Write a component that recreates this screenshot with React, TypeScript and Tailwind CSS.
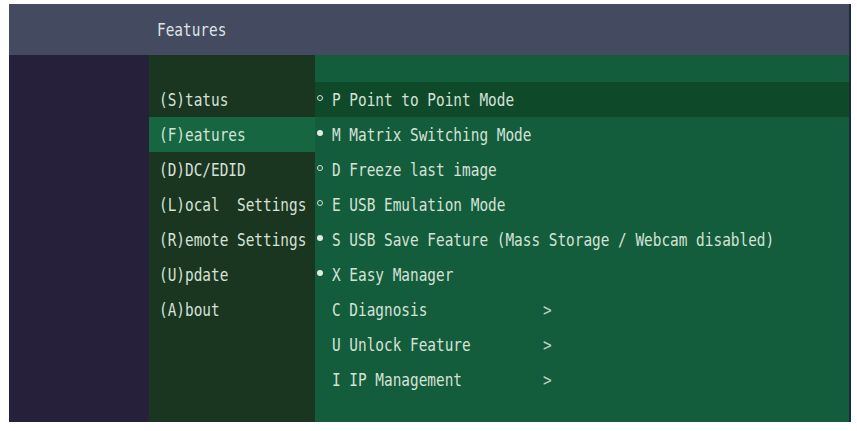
import React from "react";

const menu = [
  "(S)tatus",
  "(F)eatures",
  "(D)DC/EDID",
  "(L)ocal  Settings",
  "(R)emote Settings",
  "(U)pdate",
  "(A)bout",
];

type Item = { text: string; bullet: "hollow" | "filled" | "none"; sub?: boolean };
const items: Item[] = [
  { text: "P Point to Point Mode", bullet: "hollow" },
  { text: "M Matrix Switching Mode", bullet: "filled" },
  { text: "D Freeze last image", bullet: "hollow" },
  { text: "E USB Emulation Mode", bullet: "hollow" },
  { text: "S USB Save Feature (Mass Storage / Webcam disabled)", bullet: "filled" },
  { text: "X Easy Manager", bullet: "filled" },
  { text: "C Diagnosis", bullet: "none", sub: true },
  { text: "U Unlock Feature", bullet: "none", sub: true },
  { text: "I IP Management", bullet: "none", sub: true },
];

const font =
  "inline-block origin-left scale-x-[0.8] font-['DejaVu_Sans_Mono','Liberation_Mono',monospace] text-[18px] leading-[20px] font-light whitespace-pre";

function T({ children, className = "" }: { children: React.ReactNode; className?: string }) {
  return <span className={`${font} ${className}`}>{children}</span>;
}

export default function App() {
  return (
    <div className="w-[857px] h-[431px] bg-white pt-[4px] pl-[9px]">
      <div className="w-[842px] h-[418px] flex flex-col border-r-2 border-[#1b2a3c]">
        <div className="h-[51px] bg-[#444a5f] flex items-center shrink-0">
          <div className="w-[148px] shrink-0" />
          <T className="text-[#dfe3e8]">Features</T>
        </div>
        <div className="flex-1 flex">
          <div className="w-[140px] bg-[#26203a]" />
          <div className="w-[166px] bg-[#1a3520] pt-[27px] flex flex-col">
            {menu.map((m, i) => (
              <div
                key={m}
                className={`h-[35px] flex items-center pl-[10px] overflow-hidden ${i === 1 ? "bg-[#166642]" : ""}`}
              >
                <T className="text-[#d6e2d8]">{m}</T>
              </div>
            ))}
          </div>
          <div className="flex-1 bg-[#135d3c] pt-[27px] flex flex-col overflow-hidden">
            {items.map((it, i) => (
              <div
                key={it.text}
                className={`h-[35px] flex items-center pl-[2px] ${i === 0 ? "bg-[#0e4a2a]" : ""}`}
              >
                <div className="w-[15px] shrink-0 flex items-center -mt-[3px]">
                  {it.bullet === "hollow" && (
                    <div className="w-[6px] h-[6px] rounded-full border border-[#d6e2d8]" />
                  )}
                  {it.bullet === "filled" && (
                    <div className="w-[6px] h-[6px] rounded-full bg-[#e2ebe4]" />
                  )}
                </div>
                {it.sub ? (
                  <>
                    <div className="w-[211px] shrink-0">
                      <T className="text-[#d6e2d8]">{it.text}</T>
                    </div>
                    <T className="text-[#bcd0c2]">&gt;</T>
                  </>
                ) : (
                  <T className="text-[#d6e2d8]">{it.text}</T>
                )}
              </div>
            ))}
          </div>
        </div>
      </div>
    </div>
  );
}
